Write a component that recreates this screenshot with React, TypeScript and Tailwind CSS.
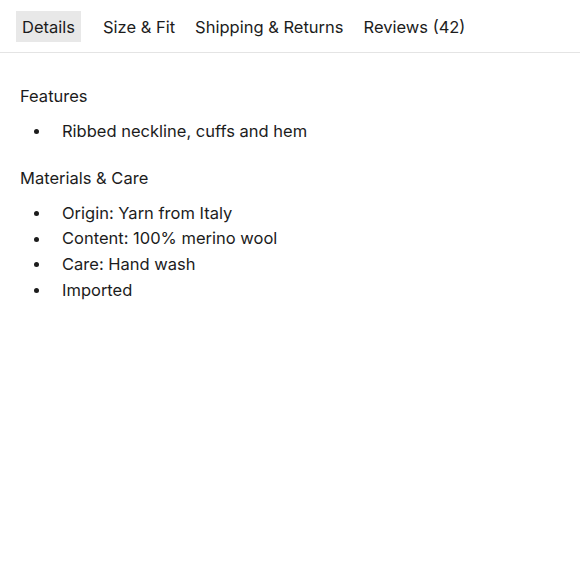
import { useState } from 'react';

const tabs = ['Details', 'Size & Fit', 'Shipping & Returns', 'Reviews (42)'];

const sections = [
  { title: 'Features', items: ['Ribbed neckline, cuffs and hem'] },
  {
    title: 'Materials & Care',
    items: ['Origin: Yarn from Italy', 'Content: 100% merino wool', 'Care: Hand wash', 'Imported'],
  },
];

export default function App() {
  const [active, setActive] = useState(0);

  return (
    <div className="min-h-screen bg-white text-[#1c1c1c] font-['Inter',sans-serif] text-[16.5px]">
      {/* Tabs */}
      <div className="flex items-start gap-[8px] h-[53px] pt-[11px] px-4 border-b border-[#e4e4e4]">
        {tabs.map((t, i) => (
          <button
            key={t}
            onClick={() => setActive(i)}
            className={`h-[31px] px-[6px] leading-[33px] ${i === active ? 'bg-[#e8e8e8] mr-[8px]' : ''}`}
          >
            {t}
          </button>
        ))}
      </div>

      {/* Details content */}
      <div className="px-5 pt-[30px]">
        {sections.map((s) => (
          <div key={s.title} className="mb-[20px]">
            <h3 className="leading-[26px] mb-[10px]">{s.title}</h3>
            <ul>
              {s.items.map((item) => (
                <li key={item} className="flex items-center leading-[25.7px]">
                  <span className="w-[42px] pl-[14px] flex">
                    <span className="w-[5px] h-[5px] rounded-full bg-[#1c1c1c]" />
                  </span>
                  <span>{item}</span>
                </li>
              ))}
            </ul>
          </div>
        ))}
      </div>
    </div>
  );
}
